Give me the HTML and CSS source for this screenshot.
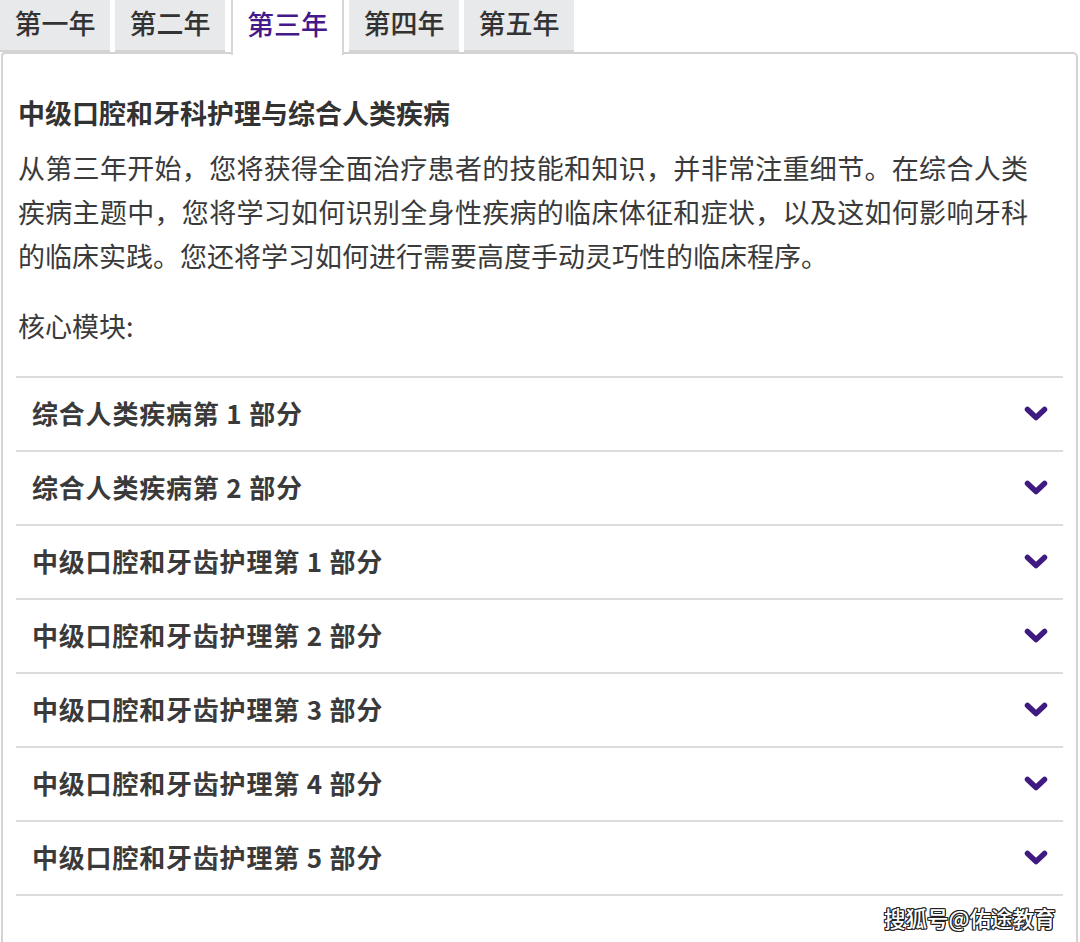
FILE: index.html
```html
<!DOCTYPE html>
<html lang="zh-CN">
<head>
<meta charset="utf-8">
<link rel="stylesheet" href="styles.css">
</head>
<body>
<div class="page">
  <div class="tabs">
    <div class="tab">第一年</div>
    <div class="tab">第二年</div>
    <div class="tab active">第三年</div>
    <div class="tab">第四年</div>
    <div class="tab">第五年</div>
  </div>
  <div class="panel">
    <h2 class="title">中级口腔和牙科护理与综合人类疾病</h2>
    <p class="desc">从第三年开始，您将获得全面治疗患者的技能和知识，并非常注重细节。在综合人类疾病主题中，您将学习如何识别全身性疾病的临床体征和症状，以及这如何影响牙科的临床实践。您还将学习如何进行需要高度手动灵巧性的临床程序。</p>
    <p class="core">核心模块:</p>
    <ul class="acc">
      <li class="row"><span>综合人类疾病第 1 部分</span><svg class="chev" viewBox="0 0 24 16"><path d="M3.5 3.5 L12 11.5 L20.5 3.5" /></svg></li>
      <li class="row"><span>综合人类疾病第 2 部分</span><svg class="chev" viewBox="0 0 24 16"><path d="M3.5 3.5 L12 11.5 L20.5 3.5" /></svg></li>
      <li class="row"><span>中级口腔和牙齿护理第 1 部分</span><svg class="chev" viewBox="0 0 24 16"><path d="M3.5 3.5 L12 11.5 L20.5 3.5" /></svg></li>
      <li class="row"><span>中级口腔和牙齿护理第 2 部分</span><svg class="chev" viewBox="0 0 24 16"><path d="M3.5 3.5 L12 11.5 L20.5 3.5" /></svg></li>
      <li class="row"><span>中级口腔和牙齿护理第 3 部分</span><svg class="chev" viewBox="0 0 24 16"><path d="M3.5 3.5 L12 11.5 L20.5 3.5" /></svg></li>
      <li class="row"><span>中级口腔和牙齿护理第 4 部分</span><svg class="chev" viewBox="0 0 24 16"><path d="M3.5 3.5 L12 11.5 L20.5 3.5" /></svg></li>
      <li class="row"><span>中级口腔和牙齿护理第 5 部分</span><svg class="chev" viewBox="0 0 24 16"><path d="M3.5 3.5 L12 11.5 L20.5 3.5" /></svg></li>
    </ul>
  </div>
  <div class="watermark">搜狐号@佑途教育</div>
</div>
</body>
</html>
```

FILE: styles.css
```css
html, body {
  margin: 0;
  padding: 0;
  background: #ffffff;
}
body {
  font-family: "Noto Sans CJK SC", "Noto Sans", sans-serif;
  color: #333333;
  width: 1080px;
  height: 942px;
  overflow: hidden;
}
.page {
  position: relative;
  width: 1080px;
  height: 942px;
  overflow: hidden;
}
.tabs {
  display: flex;
  gap: 5px;
  height: 52px;
  position: relative;
  z-index: 2;
}
.tab {
  width: 110px;
  height: 52px;
  background: #e8e9ea;
  font-size: 27px;
  font-weight: 500;
  color: #333333;
  display: flex;
  align-items: center;
  justify-content: center;
  box-sizing: border-box;
  border-bottom: 2px solid #d3d3d3;
  padding-bottom: 5px;
}
.tab.active {
  background: #ffffff;
  color: #45198a;
  width: 113px;
  height: 55px;
  border: 2px solid #d6d6d6;
  border-bottom: none;
  border-top: none;
  padding-bottom: 8px;
  margin-left: 1px;
}
.panel {
  margin-left: 1px;
  width: 1077px;
  box-sizing: border-box;
  border: 2px solid #d3d3d3;
  border-radius: 4px 5px 0 0;
  padding: 39px 14px 0 15px;
  min-height: 900px;
}
.title {
  margin: 0;
  font-size: 27px;
  line-height: 40px;
  font-weight: 700;
  color: #333333;
}
.desc {
  margin: 13px 0 0 0;
  width: 1010px;
  font-size: 27px;
  line-height: 44px;
  letter-spacing: 0;
  text-align: justify;
  color: #3a3a3a;
}
.core {
  margin: 26px 0 0 0;
  font-size: 27px;
  line-height: 44px;
  color: #3a3a3a;
}
.acc {
  list-style: none;
  margin: 28px 0 0 -2px;
  padding: 0;
  border-top: 2px solid #dcdcdc;
  width: 1047px;
}
.row {
  height: 74px;
  box-sizing: border-box;
  border-bottom: 2px solid #dcdcdc;
  display: flex;
  align-items: center;
  justify-content: space-between;
  padding: 0 15px 0 16px;
  font-size: 26px;
  font-weight: 700;
  color: #3a3a3a;
  letter-spacing: 0.8px;
}
.row span {
  margin-top: -3px;
}
.chev {
  width: 24px;
  height: 16px;
  margin-top: -1px;
}
.chev path {
  fill: none;
  stroke: #3f1a80;
  stroke-width: 5.5;
  stroke-linecap: round;
  stroke-linejoin: round;
}
.watermark {
  position: absolute;
  left: 884px;
  top: 903px;
  font-size: 21.5px;
  line-height: 30px;
  font-weight: 500;
  color: #ffffff;
  text-shadow: 1px 1px 0 #222, -1px -1px 0 #222, 1px -1px 0 #222, -1px 1px 0 #222, 0 1px 0 #222, 0 -1px 0 #222, 1px 0 0 #222, -1px 0 0 #222;
}
```
